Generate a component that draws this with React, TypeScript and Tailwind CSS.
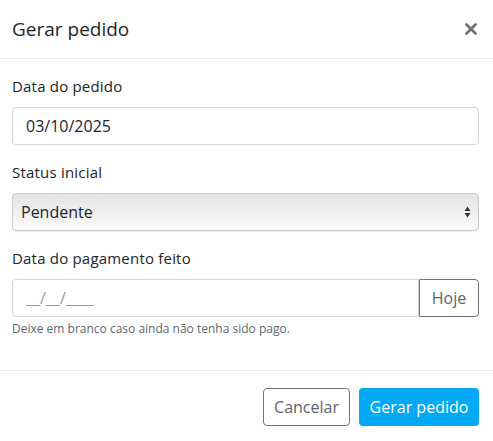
export default function App() {
  const font = { fontFamily: "'Open Sans', Lato, sans-serif" };
  return (
    <div className="w-[493px] h-[441px] bg-white text-[#212529] overflow-hidden" style={font}>
      <div className="flex items-center justify-between pl-3 pr-4 py-[14px] border-b border-[#e9ecef]">
        <h1 className="text-[19px] leading-[30px] font-normal">Gerar pedido</h1>
        <svg width="12" height="12" viewBox="0 0 12 12">
          <path d="M1.5 1.5 10.5 10.5M10.5 1.5 1.5 10.5" stroke="#6f6f6f" strokeWidth="2.6" strokeLinecap="round" />
        </svg>
      </div>

      <div className="pl-3 pr-[14px] pt-4 pb-8 flex flex-col gap-4">
        <div>
          <label className="block text-[15px] leading-[22px] mb-[10px] tracking-[0.2px]">Data do pedido</label>
          <div className="h-[38px] border border-[#ced4da] rounded flex items-center px-[13px] text-[16px]">
            03/10/2025
          </div>
        </div>

        <div>
          <label className="block text-[15px] leading-[22px] mb-[10px] tracking-[0.2px]">Status inicial</label>
          <div className="h-[38px] border border-[#c9cdd1] rounded flex items-center justify-between pl-2 pr-[7px] text-[16px] bg-gradient-to-b from-[#e3e3e3] to-[#fcfcfc] shadow-[0_1px_1px_rgba(0,0,0,0.08)]">
            <span>Pendente</span>
            <svg width="7" height="12" viewBox="0 0 7 12">
              <path d="M3.5 0.5 6.5 5H0.5Z M3.5 11.5 6.5 7H0.5Z" fill="#333" />
            </svg>
          </div>
        </div>

        <div>
          <label className="block text-[15px] leading-[22px] mb-[10px] tracking-[0.2px]">Data do pagamento feito</label>
          <div className="flex h-[38px]">
            <div className="flex-1 border border-[#ced4da] rounded-l flex items-center px-[13px] text-[16px] text-[#9a9a9a]">
              __/__/____
            </div>
            <div className="w-[60px] border border-[#6c757d] rounded-r flex items-center justify-center text-[16px] text-[#5d646b]">
              Hoje
            </div>
          </div>
          <p className="mt-[3px] text-[12px] leading-[18px] text-[#5f666d]">
            Deixe em branco caso ainda não tenha sido pago.
          </p>
        </div>
      </div>

      <div className="border-t border-[#e9ecef] flex justify-end gap-[9px] pl-3 pr-[14px] pt-[17px]">
        <button className="h-[38px] w-[87px] border border-[#6c757d] rounded text-[16px] text-[#5d646b]">
          Cancelar
        </button>
        <button className="h-[38px] w-[120px] rounded bg-[#03a9f4] text-white text-[16px]">
          Gerar pedido
        </button>
      </div>
    </div>
  );
}
